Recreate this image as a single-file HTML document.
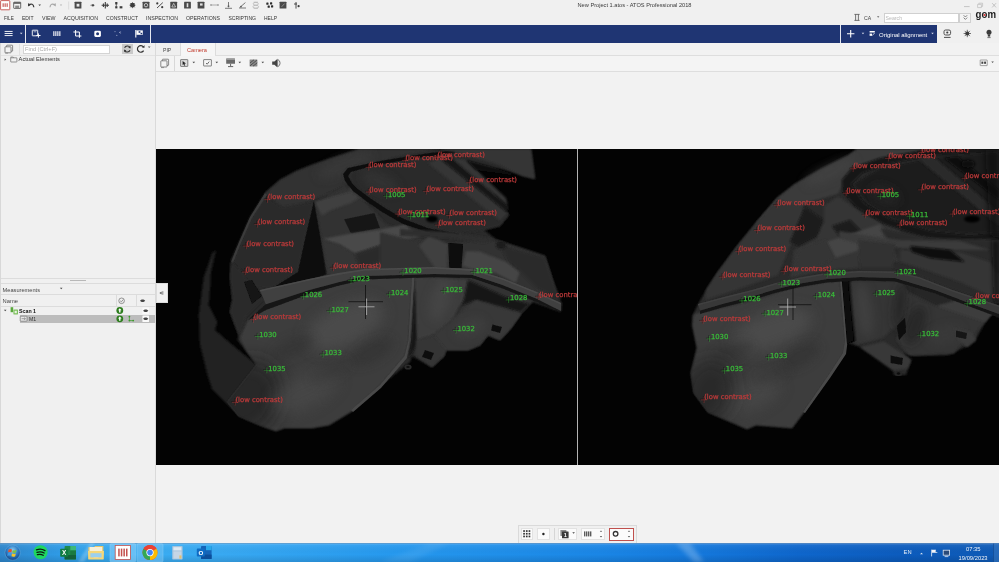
<!DOCTYPE html>
<html><head><meta charset="utf-8"><title>New Project 1.atos - ATOS Professional 2018</title>
<style>
*{box-sizing:border-box;margin:0;padding:0}
html,body{width:999px;height:562px;overflow:hidden;background:#f0f0f0;font-family:"Liberation Sans",sans-serif;color:#333}
.a{position:absolute}
#app{position:absolute;left:0;top:0;width:999px;height:562px;overflow:hidden}
#chrome{position:absolute;left:0;top:0;width:999px;height:562px;filter:blur(0.35px)}
</style></head><body>
<div id="app">
<div id="chrome">
<div class="a" style="left:0px;top:0px;width:999px;height:562px;background:#f0f0f0;"></div>
<div class="a" style="left:0px;top:25px;width:936.5px;height:17.5px;background:#1f3573;"></div>
<div class="a" style="left:25.2px;top:25px;width:0.8px;height:17.5px;background:#e4e7f0;"></div>
<div class="a" style="left:150.2px;top:25px;width:0.8px;height:17.5px;background:#e4e7f0;"></div>
<div class="a" style="left:840.2px;top:25px;width:0.8px;height:17.5px;background:#e4e7f0;"></div>
<div class="a" style="left:155.5px;top:43px;width:843.5px;height:500px;background:#f2f2f2;"></div>
<div class="a" style="left:155px;top:43px;width:1px;height:500px;background:#dadada;"></div>
<div class="a" style="left:156px;top:43px;width:24px;height:12.5px;background:#efefef;"></div>
<div class="a" style="left:180px;top:43px;width:35.5px;height:13px;background:#f6f6f6;border-left:1px solid #dcdcdc;border-right:1px solid #dcdcdc"></div>
<div class="a" style="left:215px;top:55px;width:784px;height:0.9px;background:#dedede;"></div>
<div class="a" style="left:156px;top:55px;width:24px;height:0.9px;background:#dedede;"></div>
<div class="a" style="left:156px;top:56px;width:843px;height:15px;background:#f4f4f4;"></div>
<div class="a" style="left:156px;top:71px;width:843px;height:0.9px;background:#dedede;"></div>
<div class="a" style="left:174.3px;top:56px;width:0.8px;height:14.5px;background:#d8d8d8;"></div>
<div class="a" style="left:155.5px;top:149px;width:843.5px;height:316px;background:#030303;"></div>
<div class="a" style="left:0px;top:55.2px;width:155px;height:0.8px;background:#e2e2e2;"></div>
<div class="a" style="left:0px;top:278px;width:155px;height:0.8px;background:#dcdcdc;"></div>
<div class="a" style="left:0px;top:282.8px;width:155px;height:0.8px;background:#dcdcdc;"></div>
<div class="a" style="left:70px;top:280px;width:15.5px;height:1.4px;background:#b8b8b8;"></div>
<div class="a" style="left:0px;top:294.3px;width:155px;height:0.8px;background:#dcdcdc;"></div>
<div class="a" style="left:0px;top:306.3px;width:155px;height:0.8px;background:#dcdcdc;"></div>
<div class="a" style="left:116.2px;top:295px;width:0.8px;height:11.5px;background:#dcdcdc;"></div>
<div class="a" style="left:136.2px;top:295px;width:0.8px;height:11.5px;background:#dcdcdc;"></div>
<div class="a" style="left:0px;top:43px;width:0.8px;height:500px;background:#d8d8d8;"></div>
<div class="a" style="left:19.2px;top:43.5px;width:0.7px;height:11.5px;background:#e0e0e0;"></div>
<div class="a" style="left:19.5px;top:315.3px;width:135.5px;height:7.4px;background:#bcbcbc;"></div>
<div class="a" style="left:23px;top:44.5px;width:87px;height:9px;background:#ffffff;border:0.7px solid #d4d4d4"></div>
<div class="a" style="left:122px;top:44px;width:10.5px;height:10px;background:#c9c9c9;"></div>
<div class="a" style="left:883.5px;top:12.5px;width:75.5px;height:10px;background:#ffffff;border:0.7px solid #d0d0d0"></div>
<div class="a" style="left:959px;top:12.5px;width:12px;height:10px;background:#f4f4f4;border:0.7px solid #d0d0d0"></div>
<div class="a" style="left:155.5px;top:282.5px;width:12.3px;height:20.5px;background:#f1f1f1;border:0.6px solid #dcdcdc"></div>
<div class="a" style="left:517.5px;top:524.5px;width:119px;height:19px;background:#f0f0f0;border:0.8px solid #dadada"></div>
<div class="a" style="left:521px;top:528px;width:12px;height:12px;background:#fbfbfb;border:0.6px solid #e2e2e2"></div>
<div class="a" style="left:537px;top:528px;width:12.5px;height:12px;background:#fbfbfb;border:0.6px solid #e2e2e2"></div>
<div class="a" style="left:558px;top:528px;width:19px;height:12px;background:#fbfbfb;border:0.6px solid #e2e2e2"></div>
<div class="a" style="left:581px;top:528px;width:24px;height:12px;background:#fbfbfb;border:0.6px solid #e2e2e2"></div>
<div class="a" style="left:609px;top:527.5px;width:25px;height:13px;background:#fbfbfb;border:0.9px solid #c0504d"></div>
<div class="a" style="left:554.3px;top:528px;width:0.8px;height:12px;background:#d6d6d6;"></div>
</div>
<svg class="a" style="left:0;top:0" width="999" height="562" viewBox="0 0 999 562">
<defs><filter id="b4" x="-100%" y="-100%" width="300%" height="300%"><feGaussianBlur stdDeviation="0.4"/></filter><filter id="b5" x="-100%" y="-100%" width="300%" height="300%"><feGaussianBlur stdDeviation="0.5"/></filter><filter id="b6" x="-100%" y="-100%" width="300%" height="300%"><feGaussianBlur stdDeviation="0.6"/></filter><filter id="b7" x="-100%" y="-100%" width="300%" height="300%"><feGaussianBlur stdDeviation="0.7"/></filter><filter id="b8" x="-100%" y="-100%" width="300%" height="300%"><feGaussianBlur stdDeviation="0.8"/></filter><filter id="b9" x="-100%" y="-100%" width="300%" height="300%"><feGaussianBlur stdDeviation="0.9"/></filter><filter id="b10" x="-100%" y="-100%" width="300%" height="300%"><feGaussianBlur stdDeviation="1"/></filter><filter id="b12" x="-100%" y="-100%" width="300%" height="300%"><feGaussianBlur stdDeviation="1.2"/></filter><filter id="b15" x="-100%" y="-100%" width="300%" height="300%"><feGaussianBlur stdDeviation="1.5"/></filter><filter id="b20" x="-100%" y="-100%" width="300%" height="300%"><feGaussianBlur stdDeviation="2"/></filter><filter id="b30" x="-100%" y="-100%" width="300%" height="300%"><feGaussianBlur stdDeviation="3"/></filter><filter id="b40" x="-100%" y="-100%" width="300%" height="300%"><feGaussianBlur stdDeviation="4"/></filter><filter id="b50" x="-100%" y="-100%" width="300%" height="300%"><feGaussianBlur stdDeviation="5"/></filter><filter id="b70" x="-100%" y="-100%" width="300%" height="300%"><feGaussianBlur stdDeviation="7"/></filter><filter id="b90" x="-100%" y="-100%" width="300%" height="300%"><feGaussianBlur stdDeviation="9"/></filter>
<clipPath id="cl"><rect x="155.5" y="149" width="421.5" height="316"/></clipPath>
<clipPath id="cr"><rect x="578" y="149" width="421" height="316"/></clipPath>
</defs>
<g clip-path="url(#cl)">
<polygon points="216,250 212.4,252.5 203.7,277.4 198.7,314.8 200,344.7 207.4,374.7 212,389 225,402 240,417 264,380 257,365 235,347 215,330 217.4,322 208.7,305 210,290 211,272" fill="#212121" filter="url(#b9)"/>
<polygon points="265,193 280,180 297,171 312,165 332,158 354,151 360,149 531,149 535,179 500,169 475,169 509,215 500,226 484,230 497,240 545,256 555,288 562,304 561,312 533,302 521,314 511,328 500,340 488,335 480,345 468,350 446,350 444,356 432,367 412,356 410,362 380,386 352,411 329,425 312,428 284,428 276,431 262,426 239,416 228,402 257,365 247,352 237.5,340 238.6,335 230,312 232.4,300 230,277 231,260 239,242 250,217" fill="#2c2c2c" filter="url(#b8)"/>
<polygon points="265,193 280,180 297,171 312,165 332,158 354,151 360,149 440,149 400,156 370,164 352,172 345,186 314,200 285,211" fill="#313131" filter="url(#b8)"/>
<ellipse cx="345" cy="165" rx="30" ry="8" fill="#3a3a3a" opacity="0.7" filter="url(#b40)" transform="rotate(-22 345 165)"/>
<polygon points="265,195 282,207 314,202 306,235 298,272 271,289 250,287 243,272 232,263 240,243 251,218" fill="#292929" filter="url(#b8)"/>
<polygon points="265,193 250,217 239,242 231,262 233,263 241,243 252,218 267,195" fill="#3a3a3a" filter="url(#b5)"/>
<polygon points="231,262 243,272 250,287 263,300 246,317 240,338 238.6,335 230,312 232.4,300 230,277" fill="#2c2c2c" filter="url(#b8)"/>
<polygon points="244,282 252,280 262,296 252,304" fill="#121212" filter="url(#b6)"/>
<polygon points="314,201 320,235 327,274 300,283 271,289 298,272 306,235" fill="#0b0b0b" filter="url(#b7)"/>
<polygon points="315,202 355,187 368,204 386,224 420,236 433,246 433,270 385,270 345,275 327,276 321,235" fill="#303030" filter="url(#b8)"/>
<polygon points="315,202 354.7,186.8 362,195.8 351,203 331,210 322,215.6" fill="#404040" filter="url(#b8)"/>
<polygon points="344,219.2 374.5,213 380,228 351,233.6" fill="#181818" filter="url(#b7)"/>
<polygon points="322.3,239 351,233.6 378,230 405,224.6 420,236 405,240 382,244.5 354.7,253.5 340,244.5" fill="#484848" filter="url(#b8)"/>
<polygon points="322.3,240 340,245.5 354.7,254.5 382,245.5 405,241 433,247 433,266 385,268 330,276 326,262" fill="#363636" filter="url(#b8)"/>
<polygon points="354.7,254.5 382,245.5 390,258 360,268" fill="#2a2a2a" filter="url(#b12)"/>
<polygon points="316,200 345,186 343,174 348,168 364,164.5 352,172 345,184 352,192 366,202 372,208 355,190" fill="#303030" filter="url(#b8)"/>
<polygon points="348,176 351,172 365,168 383,164 403,160.5 428,156.5 455,153 475,169 509,215 500,226 484,230 459,233.5 429,228.5 404,219 385,208 370,198 358,189 352,183" fill="#2a2a2a" filter="url(#b8)"/>
<ellipse cx="380" cy="182" rx="20" ry="9" fill="#363636" opacity="0.7" filter="url(#b40)" transform="rotate(25 380 182)"/>
<polygon points="343,174 348,168 364,164.5 383,160.5 403,157.3 428,153.3 455,150 455,153 428,156.5 403,160.5 383,164 365,168 351,172 348,176 352,183 358,189 370,198 385,208 404,219 429,228.5 459,233.5 459,237.5 428,232.5 402,223.5 382,212 366,201 353,191 345,181" fill="#101010" filter="url(#b6)"/>
<polygon points="428,163 440,159 508,213 500,221" fill="#353535" filter="url(#b8)"/>
<polygon points="442,160 452,158 509,207 507,212" fill="#161616" filter="url(#b8)"/>
<polygon points="452,158 466,160 506,198 508,206" fill="#343434" filter="url(#b8)"/>
<polygon points="440,149 531,149 535,179 522,176 500,165 470,156" fill="#363636" filter="url(#b8)"/>
<polygon points="466,160 492,167 521,177 505,174 476,170" fill="#0c0c0c" filter="url(#b8)"/>
<ellipse cx="432" cy="219" rx="6" ry="3.5" fill="#060606" filter="url(#b8)"/>
<polygon points="380,232 433,246 480,240 497,240 545,256 555,288 540,296 500,282 470,272 420,270 380,270" fill="#323232" filter="url(#b8)"/>
<polygon points="448,243 463,244 461.5,268 449.5,268" fill="#080808" filter="url(#b6)"/>
<polygon points="419,246 429,235.5 448,244 447,268 436,269" fill="#404040" filter="url(#b8)"/>
<polygon points="400,229 451,232 496,239 484,243 450,238 400,236" fill="#2e2e2e" filter="url(#b8)"/>
<polygon points="466,251 480,251.5 509,263 520,271.5 516,283 496,273 475,270 462,266" fill="#444444" filter="url(#b8)"/>
<polygon points="496,239 509,247.5 545,257.5 554,283 561,300 537,288.5 520,271.5 509,263" fill="#2a2a2a" filter="url(#b8)"/>
<ellipse cx="501" cy="245" rx="5" ry="4" fill="#1a1a1a" filter="url(#b10)"/>
<polygon points="248,320 266,308 309,292 337.5,284 365,278 400,276.5 412.5,277 408.5,341 404.5,357 380,386 352,411 329,425 312,428 284,428 276,431 262,426 239,416 228,402 257,365 247,352 240,338" fill="#3e3e3e" filter="url(#b8)"/>
<clipPath id="cp1"><polygon points="248,320 266,308 309,292 337.5,284 365,278 400,276.5 412.5,277 408.5,341 404.5,357 380,386 352,411 329,425 312,428 284,428 276,431 262,426 239,416 228,402 257,365 247,352 240,338"/></clipPath><g clip-path="url(#cp1)">
<ellipse cx="246" cy="398" rx="34" ry="40" fill="#222222" opacity="0.75" filter="url(#b90)" transform="rotate(30 246 398)"/>
<ellipse cx="345" cy="325" rx="42" ry="20" fill="#505050" opacity="0.75" filter="url(#b70)" transform="rotate(-25 345 325)"/>
<ellipse cx="305" cy="392" rx="36" ry="16" fill="#4c4c4c" opacity="0.65" filter="url(#b70)" transform="rotate(-25 305 392)"/>
<ellipse cx="372" cy="352" rx="24" ry="10" fill="#323232" opacity="0.6" filter="url(#b50)" transform="rotate(-28 372 352)"/>
<ellipse cx="292" cy="348" rx="24" ry="9" fill="#303030" opacity="0.55" filter="url(#b50)" transform="rotate(-25 292 348)"/>
<ellipse cx="330" cy="372" rx="22" ry="8" fill="#343434" opacity="0.4" filter="url(#b50)" transform="rotate(-25 330 372)"/>
</g>
<polygon points="412,276 414.5,276 411,341 407,358 381,388 353,412 351,410 380,385 404.5,356 408.5,340" fill="#484848" filter="url(#b5)"/>
<polygon points="416,274 470,276 500,285 533,300 521,314 511,328 500,340 488,335 480,345 468,350 446,350 444,356 432,367 416,356" fill="#303030" filter="url(#b8)"/>
<polygon points="415,290 418,290 417,345 408,359 411,341" fill="#161616" filter="url(#b8)"/>
<polygon points="415,277 468,280 464,300 452,320 434,334 417,340" fill="#3e3e3e" filter="url(#b8)"/>
<ellipse cx="440" cy="300" rx="10" ry="22" fill="#484848" opacity="0.6" filter="url(#b40)" transform="rotate(15 440 300)"/>
<polygon points="468,280 508,298 529,304 521,312 476,300 460,306 454,318 464,300" fill="#161616" filter="url(#b8)"/>
<polygon points="454,318 476,300 521,314 511,328 500,340 488,335 480,345 468,350 440,350 432,337" fill="#383838" filter="url(#b8)"/>
<ellipse cx="470" cy="328" rx="16" ry="9" fill="#424242" opacity="0.6" filter="url(#b40)" transform="rotate(-20 470 328)"/>
<polygon points="492.5,324.5 502,327 500,333 491,330.5" fill="#101010" filter="url(#b5)"/>
<polygon points="416,340 434,336 446,350 444,356 432,367 416,356" fill="#343434" filter="url(#b8)"/>
<polygon points="425,350 434,353 431,360 422,357" fill="#0e0e0e" filter="url(#b5)"/>
<ellipse cx="408" cy="367" rx="3.6" ry="2.6" fill="#2a2a2a" filter="url(#b5)"/>
<ellipse cx="408" cy="367" rx="1.6" ry="1.1" fill="#121212" filter="url(#b4)"/>
<polygon points="265.8,304.2 309.3,290.1 337.5,282.4 365,276.1 400,275 434,274 471.8,274.8 502.5,285 536.7,298.7 561,311 555,310 536.7,302 502.5,288.5 471.8,278 434,277.2 400,278.2 365,279.5 337.5,286 309.3,294 266,310 248,320" fill="#161616" filter="url(#b6)"/>
<polygon points="260,290 309,279 337.5,273.3 365,269 400,268 434,267 473.5,269.3 502.5,278.2 536.7,291.9 561,303 561,311 536.7,298.7 502.5,285 471.8,274.8 434,274 400,275 365,276.1 337.5,282.4 309.3,290.1 265.8,304.2" fill="#404040" filter="url(#b7)"/>
<polygon points="260,290 309,279 337.5,273.3 365,269 400,268 434,267 473.5,269.3 502.5,278.2 536.7,291.9 561,303 561,304.6 536.7,293.5 502.5,279.8 473.5,270.9 434,268.6 400,269.6 365,270.6 337.5,274.9 309,280.6 260,291.6" fill="#4e4e4e" opacity="0.8" filter="url(#b5)"/>
</g>
<g clip-path="url(#cr)">
<polygon points="697,306 706,290 717,273 737,246 755,224 777,198 795,184 821,169 848,155.5 857,149 999,149 999,316 990,314 977,337 967,346 948,355 914,356 903,353 911,361 906,375 894,375 892,367 860,347 846,342 844,353 829,376 804,412 792,428 756,425 747,429 708,412 694,393 691,373 697,348 692,317" fill="#2a2a2a" filter="url(#b8)"/>
<polygon points="755,224 777,198 795,184 821,169 848,155.5 857,149 930,149 890,158 862,168 845,180 838,194 810,202 780,218" fill="#3a3a3a" filter="url(#b8)"/>
<ellipse cx="830" cy="172" rx="28" ry="7" fill="#444444" opacity="0.6" filter="url(#b40)" transform="rotate(-25 830 172)"/>
<polygon points="737,246 755,224 777,200 804,207 792,242 778,275 730,292 705,300 706,290 717,273" fill="#353535" filter="url(#b8)"/>
<polygon points="805,207 823.5,220 817,237 799,246 790,242" fill="#1c1c1c" filter="url(#b8)"/>
<polygon points="824,206 838,196 866,216 900,228 900,262 860,268 826,270 790,278 794,250 817,238 824,222" fill="#363636" filter="url(#b8)"/>
<polygon points="832,226 850,220 862,232 842,240" fill="#1c1c1c" filter="url(#b8)"/>
<polygon points="826,242 880,224 892,240 835,258" fill="#444444" filter="url(#b8)"/>
<polygon points="800,248 826,240 835,258 812,268 792,275" fill="#363636" filter="url(#b8)"/>
<polygon points="842,180 852,168 880,158 920,151 960,149 999,149 999,152 930,156 890,163 862,173 851,184 864,203 890,219 930,231 970,235 999,232 999,238 960,241 920,236 884,224 856,207 843,192" fill="#121212" filter="url(#b8)"/>
<polygon points="853,184 880,168 930,158 999,152 999,232 970,234 930,230 892,218 866,202" fill="#1e1e1e" filter="url(#b8)"/>
<ellipse cx="885" cy="195" rx="16" ry="9" fill="#262626" opacity="0.7" filter="url(#b40)" transform="rotate(25 885 195)"/>
<polygon points="918,159 934,157 999,212 999,226" fill="#292929" filter="url(#b8)"/>
<polygon points="944,158 958,157 999,190 999,200" fill="#101010" filter="url(#b8)"/>
<ellipse cx="972" cy="219" rx="8" ry="3.5" fill="#060606" filter="url(#b8)"/>
<ellipse cx="968" cy="164" rx="7" ry="4" fill="#080808" filter="url(#b15)"/>
<polygon points="985,150 999,150 999,240 990,235" fill="#080808" opacity="0.7" filter="url(#b30)"/>
<polygon points="880,228 930,238 999,240 999,305 975,297 951,289 919,276 895,270 860,270 860,262 900,262" fill="#2c2c2c" filter="url(#b8)"/>
<polygon points="839,231 870,236 900,240 960,241 990,250 960,250 900,248 860,244 839,238" fill="#3a3a3a" filter="url(#b8)"/>
<polygon points="900,250 960,252 990,262 999,275 999,300 960,282 920,268 900,262" fill="#343434" filter="url(#b8)"/>
<polygon points="910,246 950,250 965,262 930,258 912,252" fill="#0e0e0e" filter="url(#b8)"/>
<polygon points="858,240 895,244 893,268 860,268" fill="#303030" filter="url(#b8)"/>
<polygon points="992,240 999,240 999,310 994,300" fill="#101010" opacity="0.8" filter="url(#b20)"/>
<polygon points="694,314 752,301 788,289 826,282 840,281 846,342 844,353 829,376 804,412 792,428 756,425 747,429 708,412 694,393 691,373 697,348 692,325" fill="#3e3e3e" filter="url(#b8)"/>
<clipPath id="cp2"><polygon points="694,314 752,301 788,289 826,282 840,281 846,342 844,353 829,376 804,412 792,428 756,425 747,429 708,412 694,393 691,373 697,348 692,325"/></clipPath><g clip-path="url(#cp2)">
<ellipse cx="772" cy="330" rx="42" ry="18" fill="#505050" opacity="0.75" filter="url(#b70)" transform="rotate(-20 772 330)"/>
<ellipse cx="748" cy="395" rx="34" ry="16" fill="#4c4c4c" opacity="0.65" filter="url(#b70)" transform="rotate(-20 748 395)"/>
<ellipse cx="800" cy="356" rx="22" ry="10" fill="#323232" opacity="0.6" filter="url(#b50)" transform="rotate(-30 800 356)"/>
<ellipse cx="732" cy="352" rx="22" ry="8" fill="#303030" opacity="0.55" filter="url(#b50)" transform="rotate(-20 732 352)"/>
<ellipse cx="770" cy="375" rx="20" ry="7" fill="#343434" opacity="0.4" filter="url(#b50)" transform="rotate(-20 770 375)"/>
<ellipse cx="708" cy="392" rx="26" ry="34" fill="#242424" opacity="0.7" filter="url(#b90)" transform="rotate(20 708 392)"/>
</g>
<polygon points="840,281 842,281 847.5,342 846,354 830,378 805,413 803,412 828,376 843,353 845,341" fill="#4a4a4a" filter="url(#b4)"/>
<polygon points="845,281 852,281 858,340 851,343" fill="#080808" filter="url(#b6)"/>
<polygon points="905,283 937,292 967,298 993,313 976,332 976,340 967,347 963,343 954,353.5 909,355.5 896,340 903,323" fill="#363636" filter="url(#b8)"/>
<polygon points="900,282 960,296 999,314 999,318 992,313 967,298 937,306 907,291" fill="#282828" filter="url(#b8)"/>
<polygon points="937,306 967,298 993,313 985,322" fill="#3c3c3c" filter="url(#b8)"/>
<ellipse cx="915" cy="325" rx="9" ry="20" fill="#202020" opacity="0.7" filter="url(#b40)" transform="rotate(20 915 325)"/>
<ellipse cx="945" cy="335" rx="18" ry="9" fill="#3e3e3e" opacity="0.5" filter="url(#b40)" transform="rotate(-15 945 335)"/>
<polygon points="850,281 901,281 907.5,291.5 905,313 897,325.5 882,338.5 856,345" fill="#363636" filter="url(#b8)"/>
<ellipse cx="864" cy="310" rx="8" ry="28" fill="#464646" opacity="0.6" filter="url(#b50)" transform="rotate(-8 864 310)"/>
<ellipse cx="900" cy="305" rx="6" ry="24" fill="#222222" opacity="0.7" filter="url(#b40)" transform="rotate(8 900 305)"/>
<polygon points="842,281 848,281 854,341 847,344" fill="#070707" filter="url(#b6)"/>
<polygon points="860,347 884,341.5 911.5,359.5 907.5,368.5 892.5,370.5" fill="#383838" filter="url(#b8)"/>
<polygon points="890.5,355.5 903,358 902,365 890.5,363" fill="#0e0e0e" filter="url(#b5)"/>
<ellipse cx="898.5" cy="373.5" rx="4" ry="2.6" fill="#262626" filter="url(#b5)"/>
<ellipse cx="898.5" cy="373.5" rx="1.8" ry="1.1" fill="#0c0c0c" filter="url(#b4)"/>
<polygon points="954,328 971,332 976,340 967,347 958,340" fill="#3a3a3a" filter="url(#b8)"/>
<polygon points="956,330.5 967,333 966,339 956,337" fill="#161616" filter="url(#b5)"/>
<polygon points="897,326 905,318 906,332 899,340" fill="#0a0a0a" filter="url(#b7)"/>
<polygon points="700,310.5 724,303.5 752,296.5 775,289.5 800,283.5 827,279 860,277 895,278 935,290 964,301 999,314 999,317.5 964,304.5 935,293.5 895,281.5 860,280.5 827,282.5 800,287 775,293 752,300 724,307 700,314" fill="#181818" filter="url(#b6)"/>
<polygon points="698,304 724,297 752,290 775,283.3 800,277.5 827,273 860,271 895,271.5 919,277 951,289.5 975,297.5 999,305.5 999,314 964,301 935,290 895,278 860,277 827,279 800,283.5 775,289.5 752,296.5 724,303.5 700,310.5" fill="#393939" filter="url(#b7)"/>
<polygon points="698,304 724,297 752,290 775,283.3 800,277.5 827,273 860,271 895,271.5 919,277 951,289.5 975,297.5 999,305.5 999,307 975,299 951,291 919,278.5 895,273 860,272.5 827,274.5 800,279 775,284.8 752,291.5 724,298.5 698,305.5" fill="#424242" opacity="0.8" filter="url(#b5)"/>
</g>
<rect x="577" y="149" width="1" height="316" fill="#b4b4b4"/>
<g font-family="DejaVu Sans, Liberation Sans, sans-serif" font-size="6.85" style="filter:blur(0.4px)" stroke-width="0.25">
<g clip-path="url(#cl)">
<path d="M348.5 301.7H383M365.5 285V319" stroke="#0a0a0a" stroke-width="0.7" fill="none"/>
<path d="M358.5 306.8H374.5M366.6 298.5V315" stroke="#b8b8b8" stroke-width="0.8" fill="none"/>
<path d="M263.7 199H270.1M266.9 195.8V202.2" stroke="#000" stroke-width="0.6" fill="none" opacity="0.7"/><path d="M264.3 199.6H270.7M267.5 196.4V202.8" stroke="#bc3a3a" stroke-width="0.55" fill="none" opacity="0.75"/><text x="267.7" y="199.2" fill="#bc3a3a" stroke="#bc3a3a">(low contrast)</text>
<path d="M253.8 223.7H260.2M257 220.5V226.9" stroke="#000" stroke-width="0.6" fill="none" opacity="0.7"/><path d="M254.4 224.3H260.8M257.6 221.1V227.5" stroke="#bc3a3a" stroke-width="0.55" fill="none" opacity="0.75"/><text x="257.8" y="223.9" fill="#bc3a3a" stroke="#bc3a3a">(low contrast)</text>
<path d="M242.6 245.4H249M245.8 242.2V248.6" stroke="#000" stroke-width="0.6" fill="none" opacity="0.7"/><path d="M243.2 246H249.6M246.4 242.8V249.2" stroke="#bc3a3a" stroke-width="0.55" fill="none" opacity="0.75"/><text x="246.6" y="245.6" fill="#bc3a3a" stroke="#bc3a3a">(low contrast)</text>
<path d="M241.4 271.4H247.8M244.6 268.2V274.6" stroke="#000" stroke-width="0.6" fill="none" opacity="0.7"/><path d="M242 272H248.4M245.2 268.8V275.2" stroke="#bc3a3a" stroke-width="0.55" fill="none" opacity="0.75"/><text x="245.4" y="271.6" fill="#bc3a3a" stroke="#bc3a3a">(low contrast)</text>
<path d="M364.9 166.7H371.3M368.1 163.5V169.9" stroke="#000" stroke-width="0.6" fill="none" opacity="0.7"/><path d="M365.5 167.3H371.9M368.7 164.1V170.5" stroke="#bc3a3a" stroke-width="0.55" fill="none" opacity="0.75"/><text x="368.9" y="166.9" fill="#bc3a3a" stroke="#bc3a3a">(low contrast)</text>
<path d="M365.2 191.3H371.6M368.4 188.1V194.5" stroke="#000" stroke-width="0.6" fill="none" opacity="0.7"/><path d="M365.8 191.9H372.2M369 188.7V195.1" stroke="#bc3a3a" stroke-width="0.55" fill="none" opacity="0.75"/><text x="369.2" y="191.5" fill="#bc3a3a" stroke="#bc3a3a">(low contrast)</text>
<path d="M329.7 267.4H336.1M332.9 264.2V270.6" stroke="#000" stroke-width="0.6" fill="none" opacity="0.7"/><path d="M330.3 268H336.7M333.5 264.8V271.2" stroke="#bc3a3a" stroke-width="0.55" fill="none" opacity="0.75"/><text x="333.7" y="267.6" fill="#bc3a3a" stroke="#bc3a3a">(low contrast)</text>
<path d="M401.4 159.8H407.8M404.6 156.6V163" stroke="#000" stroke-width="0.6" fill="none" opacity="0.7"/><path d="M402 160.4H408.4M405.2 157.2V163.6" stroke="#bc3a3a" stroke-width="0.55" fill="none" opacity="0.75"/><text x="405.4" y="160" fill="#bc3a3a" stroke="#bc3a3a">(low contrast)</text>
<path d="M394.2 213.4H400.6M397.4 210.2V216.6" stroke="#000" stroke-width="0.6" fill="none" opacity="0.7"/><path d="M394.8 214H401.2M398 210.8V217.2" stroke="#bc3a3a" stroke-width="0.55" fill="none" opacity="0.75"/><text x="398.2" y="213.6" fill="#bc3a3a" stroke="#bc3a3a">(low contrast)</text>
<path d="M422.5 190.7H428.9M425.7 187.5V193.9" stroke="#000" stroke-width="0.6" fill="none" opacity="0.7"/><path d="M423.1 191.3H429.5M426.3 188.1V194.5" stroke="#bc3a3a" stroke-width="0.55" fill="none" opacity="0.75"/><text x="426.5" y="190.9" fill="#bc3a3a" stroke="#bc3a3a">(low contrast)</text>
<path d="M433.5 156.6H439.9M436.7 153.4V159.8" stroke="#000" stroke-width="0.6" fill="none" opacity="0.7"/><path d="M434.1 157.2H440.5M437.3 154V160.4" stroke="#bc3a3a" stroke-width="0.55" fill="none" opacity="0.75"/><text x="437.5" y="156.8" fill="#bc3a3a" stroke="#bc3a3a">(low contrast)</text>
<path d="M465.6 182.1H472M468.8 178.9V185.3" stroke="#000" stroke-width="0.6" fill="none" opacity="0.7"/><path d="M466.2 182.7H472.6M469.4 179.5V185.9" stroke="#bc3a3a" stroke-width="0.55" fill="none" opacity="0.75"/><text x="469.6" y="182.3" fill="#bc3a3a" stroke="#bc3a3a">(low contrast)</text>
<path d="M445.5 214.9H451.9M448.7 211.7V218.1" stroke="#000" stroke-width="0.6" fill="none" opacity="0.7"/><path d="M446.1 215.5H452.5M449.3 212.3V218.7" stroke="#bc3a3a" stroke-width="0.55" fill="none" opacity="0.75"/><text x="449.5" y="215.1" fill="#bc3a3a" stroke="#bc3a3a">(low contrast)</text>
<path d="M434.5 224.4H440.9M437.7 221.2V227.6" stroke="#000" stroke-width="0.6" fill="none" opacity="0.7"/><path d="M435.1 225H441.5M438.3 221.8V228.2" stroke="#bc3a3a" stroke-width="0.55" fill="none" opacity="0.75"/><text x="438.5" y="224.6" fill="#bc3a3a" stroke="#bc3a3a">(low contrast)</text>
<path d="M249.7 319H256.1M252.9 315.8V322.2" stroke="#000" stroke-width="0.6" fill="none" opacity="0.7"/><path d="M250.3 319.6H256.7M253.5 316.4V322.8" stroke="#bc3a3a" stroke-width="0.55" fill="none" opacity="0.75"/><text x="253.7" y="319.2" fill="#bc3a3a" stroke="#bc3a3a">(low contrast)</text>
<path d="M231.4 401.7H237.8M234.6 398.5V404.9" stroke="#000" stroke-width="0.6" fill="none" opacity="0.7"/><path d="M232 402.3H238.4M235.2 399.1V405.5" stroke="#bc3a3a" stroke-width="0.55" fill="none" opacity="0.75"/><text x="235.4" y="401.9" fill="#bc3a3a" stroke="#bc3a3a">(low contrast)</text>
<path d="M535 296.3H541.4M538.2 293.1V299.5" stroke="#000" stroke-width="0.6" fill="none" opacity="0.7"/><path d="M535.6 296.9H542M538.8 293.7V300.1" stroke="#bc3a3a" stroke-width="0.55" fill="none" opacity="0.75"/><text x="539" y="296.5" fill="#bc3a3a" stroke="#bc3a3a">(low contrast)</text>
<path d="M383 195.5H389M386 192.5V198.5" stroke="#000" stroke-width="0.6" fill="none" opacity="0.7"/><path d="M383.6 196.1H389.6M386.6 193.1V199.1" stroke="#38ba38" stroke-width="0.55" fill="none" opacity="0.75"/><text x="388" y="196.6" fill="#38ba38" stroke="#38ba38">1005</text>
<path d="M406.8 215.8H412.8M409.8 212.8V218.8" stroke="#000" stroke-width="0.6" fill="none" opacity="0.7"/><path d="M407.4 216.4H413.4M410.4 213.4V219.4" stroke="#38ba38" stroke-width="0.55" fill="none" opacity="0.75"/><text x="411.8" y="216.9" fill="#38ba38" stroke="#38ba38">1011</text>
<path d="M399.3 272.2H405.3M402.3 269.2V275.2" stroke="#000" stroke-width="0.6" fill="none" opacity="0.7"/><path d="M399.9 272.8H405.9M402.9 269.8V275.8" stroke="#38ba38" stroke-width="0.55" fill="none" opacity="0.75"/><text x="404.3" y="273.3" fill="#38ba38" stroke="#38ba38">1020</text>
<path d="M347.4 280H353.4M350.4 277V283" stroke="#000" stroke-width="0.6" fill="none" opacity="0.7"/><path d="M348 280.6H354M351 277.6V283.6" stroke="#38ba38" stroke-width="0.55" fill="none" opacity="0.75"/><text x="352.4" y="281.1" fill="#38ba38" stroke="#38ba38">1023</text>
<path d="M299.8 296H305.8M302.8 293V299" stroke="#000" stroke-width="0.6" fill="none" opacity="0.7"/><path d="M300.4 296.6H306.4M303.4 293.6V299.6" stroke="#38ba38" stroke-width="0.55" fill="none" opacity="0.75"/><text x="304.8" y="297.1" fill="#38ba38" stroke="#38ba38">1026</text>
<path d="M386 294.1H392M389 291.1V297.1" stroke="#000" stroke-width="0.6" fill="none" opacity="0.7"/><path d="M386.6 294.7H392.6M389.6 291.7V297.7" stroke="#38ba38" stroke-width="0.55" fill="none" opacity="0.75"/><text x="391" y="295.2" fill="#38ba38" stroke="#38ba38">1024</text>
<path d="M254.2 335.9H260.2M257.2 332.9V338.9" stroke="#000" stroke-width="0.6" fill="none" opacity="0.7"/><path d="M254.8 336.5H260.8M257.8 333.5V339.5" stroke="#38ba38" stroke-width="0.55" fill="none" opacity="0.75"/><text x="259.2" y="337" fill="#38ba38" stroke="#38ba38">1030</text>
<path d="M319.4 354.2H325.4M322.4 351.2V357.2" stroke="#000" stroke-width="0.6" fill="none" opacity="0.7"/><path d="M320 354.8H326M323 351.8V357.8" stroke="#38ba38" stroke-width="0.55" fill="none" opacity="0.75"/><text x="324.4" y="355.3" fill="#38ba38" stroke="#38ba38">1033</text>
<path d="M263.2 369.7H269.2M266.2 366.7V372.7" stroke="#000" stroke-width="0.6" fill="none" opacity="0.7"/><path d="M263.8 370.3H269.8M266.8 367.3V373.3" stroke="#38ba38" stroke-width="0.55" fill="none" opacity="0.75"/><text x="268.2" y="370.8" fill="#38ba38" stroke="#38ba38">1035</text>
<path d="M326.4 310.6H332.4M329.4 307.6V313.6" stroke="#000" stroke-width="0.6" fill="none" opacity="0.7"/><path d="M327 311.2H333M330 308.2V314.2" stroke="#38ba38" stroke-width="0.55" fill="none" opacity="0.75"/><text x="331.4" y="311.7" fill="#38ba38" stroke="#38ba38">1027</text>
<path d="M470.4 271.6H476.4M473.4 268.6V274.6" stroke="#000" stroke-width="0.6" fill="none" opacity="0.7"/><path d="M471 272.2H477M474 269.2V275.2" stroke="#38ba38" stroke-width="0.55" fill="none" opacity="0.75"/><text x="475.4" y="272.7" fill="#38ba38" stroke="#38ba38">1021</text>
<path d="M440.4 290.7H446.4M443.4 287.7V293.7" stroke="#000" stroke-width="0.6" fill="none" opacity="0.7"/><path d="M441 291.3H447M444 288.3V294.3" stroke="#38ba38" stroke-width="0.55" fill="none" opacity="0.75"/><text x="445.4" y="291.8" fill="#38ba38" stroke="#38ba38">1025</text>
<path d="M505 299.3H511M508 296.3V302.3" stroke="#000" stroke-width="0.6" fill="none" opacity="0.7"/><path d="M505.6 299.9H511.6M508.6 296.9V302.9" stroke="#38ba38" stroke-width="0.55" fill="none" opacity="0.75"/><text x="510" y="300.4" fill="#38ba38" stroke="#38ba38">1028</text>
<path d="M452.4 329.9H458.4M455.4 326.9V332.9" stroke="#000" stroke-width="0.6" fill="none" opacity="0.7"/><path d="M453 330.5H459M456 327.5V333.5" stroke="#38ba38" stroke-width="0.55" fill="none" opacity="0.75"/><text x="457.4" y="331" fill="#38ba38" stroke="#38ba38">1032</text>
</g><g clip-path="url(#cr)">
<path d="M778 304.7H811.5M793 287.6V320" stroke="#0a0a0a" stroke-width="0.7" fill="none"/>
<path d="M779.5 307H796M787.7 298.5V315.5" stroke="#b8b8b8" stroke-width="0.8" fill="none"/>
<path d="M773.2 204.6H779.6M776.4 201.4V207.8" stroke="#000" stroke-width="0.6" fill="none" opacity="0.7"/><path d="M773.8 205.2H780.2M777 202V208.4" stroke="#bc3a3a" stroke-width="0.55" fill="none" opacity="0.75"/><text x="777.2" y="204.8" fill="#bc3a3a" stroke="#bc3a3a">(low contrast)</text>
<path d="M753.5 229.9H759.9M756.7 226.7V233.1" stroke="#000" stroke-width="0.6" fill="none" opacity="0.7"/><path d="M754.1 230.5H760.5M757.3 227.3V233.7" stroke="#bc3a3a" stroke-width="0.55" fill="none" opacity="0.75"/><text x="757.5" y="230.1" fill="#bc3a3a" stroke="#bc3a3a">(low contrast)</text>
<path d="M734.7 251H741.1M737.9 247.8V254.2" stroke="#000" stroke-width="0.6" fill="none" opacity="0.7"/><path d="M735.3 251.6H741.7M738.5 248.4V254.8" stroke="#bc3a3a" stroke-width="0.55" fill="none" opacity="0.75"/><text x="738.7" y="251.2" fill="#bc3a3a" stroke="#bc3a3a">(low contrast)</text>
<path d="M718.9 276.4H725.3M722.1 273.2V279.6" stroke="#000" stroke-width="0.6" fill="none" opacity="0.7"/><path d="M719.5 277H725.9M722.7 273.8V280.2" stroke="#bc3a3a" stroke-width="0.55" fill="none" opacity="0.75"/><text x="722.9" y="276.6" fill="#bc3a3a" stroke="#bc3a3a">(low contrast)</text>
<path d="M780.2 270.7H786.6M783.4 267.5V273.9" stroke="#000" stroke-width="0.6" fill="none" opacity="0.7"/><path d="M780.8 271.3H787.2M784 268.1V274.5" stroke="#bc3a3a" stroke-width="0.55" fill="none" opacity="0.75"/><text x="784.2" y="270.9" fill="#bc3a3a" stroke="#bc3a3a">(low contrast)</text>
<path d="M842.2 192.6H848.6M845.4 189.4V195.8" stroke="#000" stroke-width="0.6" fill="none" opacity="0.7"/><path d="M842.8 193.2H849.2M846 190V196.4" stroke="#bc3a3a" stroke-width="0.55" fill="none" opacity="0.75"/><text x="846.2" y="192.8" fill="#bc3a3a" stroke="#bc3a3a">(low contrast)</text>
<path d="M849.3 168.2H855.7M852.5 165V171.4" stroke="#000" stroke-width="0.6" fill="none" opacity="0.7"/><path d="M849.9 168.8H856.3M853.1 165.6V172" stroke="#bc3a3a" stroke-width="0.55" fill="none" opacity="0.75"/><text x="853.3" y="168.4" fill="#bc3a3a" stroke="#bc3a3a">(low contrast)</text>
<path d="M884.5 157.7H890.9M887.7 154.5V160.9" stroke="#000" stroke-width="0.6" fill="none" opacity="0.7"/><path d="M885.1 158.3H891.5M888.3 155.1V161.5" stroke="#bc3a3a" stroke-width="0.55" fill="none" opacity="0.75"/><text x="888.5" y="157.9" fill="#bc3a3a" stroke="#bc3a3a">(low contrast)</text>
<path d="M917.4 151.7H923.8M920.6 148.5V154.9" stroke="#000" stroke-width="0.6" fill="none" opacity="0.7"/><path d="M918 152.3H924.4M921.2 149.1V155.5" stroke="#bc3a3a" stroke-width="0.55" fill="none" opacity="0.75"/><text x="921.4" y="151.9" fill="#bc3a3a" stroke="#bc3a3a">(low contrast)</text>
<path d="M917.5 189.2H923.9M920.7 186V192.4" stroke="#000" stroke-width="0.6" fill="none" opacity="0.7"/><path d="M918.1 189.8H924.5M921.3 186.6V193" stroke="#bc3a3a" stroke-width="0.55" fill="none" opacity="0.75"/><text x="921.5" y="189.4" fill="#bc3a3a" stroke="#bc3a3a">(low contrast)</text>
<path d="M861.6 214.4H868M864.8 211.2V217.6" stroke="#000" stroke-width="0.6" fill="none" opacity="0.7"/><path d="M862.2 215H868.6M865.4 211.8V218.2" stroke="#bc3a3a" stroke-width="0.55" fill="none" opacity="0.75"/><text x="865.6" y="214.6" fill="#bc3a3a" stroke="#bc3a3a">(low contrast)</text>
<path d="M896 224.4H902.4M899.2 221.2V227.6" stroke="#000" stroke-width="0.6" fill="none" opacity="0.7"/><path d="M896.6 225H903M899.8 221.8V228.2" stroke="#bc3a3a" stroke-width="0.55" fill="none" opacity="0.75"/><text x="900" y="224.6" fill="#bc3a3a" stroke="#bc3a3a">(low contrast)</text>
<path d="M948.9 213.4H955.3M952.1 210.2V216.6" stroke="#000" stroke-width="0.6" fill="none" opacity="0.7"/><path d="M949.5 214H955.9M952.7 210.8V217.2" stroke="#bc3a3a" stroke-width="0.55" fill="none" opacity="0.75"/><text x="952.9" y="213.6" fill="#bc3a3a" stroke="#bc3a3a">(low contrast)</text>
<path d="M961 177.7H967.4M964.2 174.5V180.9" stroke="#000" stroke-width="0.6" fill="none" opacity="0.7"/><path d="M961.6 178.3H968M964.8 175.1V181.5" stroke="#bc3a3a" stroke-width="0.55" fill="none" opacity="0.75"/><text x="965" y="177.9" fill="#bc3a3a" stroke="#bc3a3a">(low contrast)</text>
<path d="M699.2 320.4H705.6M702.4 317.2V323.6" stroke="#000" stroke-width="0.6" fill="none" opacity="0.7"/><path d="M699.8 321H706.2M703 317.8V324.2" stroke="#bc3a3a" stroke-width="0.55" fill="none" opacity="0.75"/><text x="703.2" y="320.6" fill="#bc3a3a" stroke="#bc3a3a">(low contrast)</text>
<path d="M700.2 399.2H706.6M703.4 396V402.4" stroke="#000" stroke-width="0.6" fill="none" opacity="0.7"/><path d="M700.8 399.8H707.2M704 396.6V403" stroke="#bc3a3a" stroke-width="0.55" fill="none" opacity="0.75"/><text x="704.2" y="399.4" fill="#bc3a3a" stroke="#bc3a3a">(low contrast)</text>
<path d="M971.2 297.9H977.6M974.4 294.7V301.1" stroke="#000" stroke-width="0.6" fill="none" opacity="0.7"/><path d="M971.8 298.5H978.2M975 295.3V301.7" stroke="#bc3a3a" stroke-width="0.55" fill="none" opacity="0.75"/><text x="975.2" y="298.1" fill="#bc3a3a" stroke="#bc3a3a">(low contrast)</text>
<path d="M876.7 195.7H882.7M879.7 192.7V198.7" stroke="#000" stroke-width="0.6" fill="none" opacity="0.7"/><path d="M877.3 196.3H883.3M880.3 193.3V199.3" stroke="#38ba38" stroke-width="0.55" fill="none" opacity="0.75"/><text x="881.7" y="196.8" fill="#38ba38" stroke="#38ba38">1005</text>
<path d="M906 215.6H912M909 212.6V218.6" stroke="#000" stroke-width="0.6" fill="none" opacity="0.7"/><path d="M906.6 216.2H912.6M909.6 213.2V219.2" stroke="#38ba38" stroke-width="0.55" fill="none" opacity="0.75"/><text x="911" y="216.7" fill="#38ba38" stroke="#38ba38">1011</text>
<path d="M823.4 274.1H829.4M826.4 271.1V277.1" stroke="#000" stroke-width="0.6" fill="none" opacity="0.7"/><path d="M824 274.7H830M827 271.7V277.7" stroke="#38ba38" stroke-width="0.55" fill="none" opacity="0.75"/><text x="828.4" y="275.2" fill="#38ba38" stroke="#38ba38">1020</text>
<path d="M894.1 272.6H900.1M897.1 269.6V275.6" stroke="#000" stroke-width="0.6" fill="none" opacity="0.7"/><path d="M894.7 273.2H900.7M897.7 270.2V276.2" stroke="#38ba38" stroke-width="0.55" fill="none" opacity="0.75"/><text x="899.1" y="273.7" fill="#38ba38" stroke="#38ba38">1021</text>
<path d="M777.6 283.4H783.6M780.6 280.4V286.4" stroke="#000" stroke-width="0.6" fill="none" opacity="0.7"/><path d="M778.2 284H784.2M781.2 281V287" stroke="#38ba38" stroke-width="0.55" fill="none" opacity="0.75"/><text x="782.6" y="284.5" fill="#38ba38" stroke="#38ba38">1023</text>
<path d="M812.8 296H818.8M815.8 293V299" stroke="#000" stroke-width="0.6" fill="none" opacity="0.7"/><path d="M813.4 296.6H819.4M816.4 293.6V299.6" stroke="#38ba38" stroke-width="0.55" fill="none" opacity="0.75"/><text x="817.8" y="297.1" fill="#38ba38" stroke="#38ba38">1024</text>
<path d="M872.8 293.4H878.8M875.8 290.4V296.4" stroke="#000" stroke-width="0.6" fill="none" opacity="0.7"/><path d="M873.4 294H879.4M876.4 291V297" stroke="#38ba38" stroke-width="0.55" fill="none" opacity="0.75"/><text x="877.8" y="294.5" fill="#38ba38" stroke="#38ba38">1025</text>
<path d="M738.3 300.2H744.3M741.3 297.2V303.2" stroke="#000" stroke-width="0.6" fill="none" opacity="0.7"/><path d="M738.9 300.8H744.9M741.9 297.8V303.8" stroke="#38ba38" stroke-width="0.55" fill="none" opacity="0.75"/><text x="743.3" y="301.3" fill="#38ba38" stroke="#38ba38">1026</text>
<path d="M761.4 313.4H767.4M764.4 310.4V316.4" stroke="#000" stroke-width="0.6" fill="none" opacity="0.7"/><path d="M762 314H768M765 311V317" stroke="#38ba38" stroke-width="0.55" fill="none" opacity="0.75"/><text x="766.4" y="314.5" fill="#38ba38" stroke="#38ba38">1027</text>
<path d="M705.9 338.2H711.9M708.9 335.2V341.2" stroke="#000" stroke-width="0.6" fill="none" opacity="0.7"/><path d="M706.5 338.8H712.5M709.5 335.8V341.8" stroke="#38ba38" stroke-width="0.55" fill="none" opacity="0.75"/><text x="710.9" y="339.3" fill="#38ba38" stroke="#38ba38">1030</text>
<path d="M765 357H771M768 354V360" stroke="#000" stroke-width="0.6" fill="none" opacity="0.7"/><path d="M765.6 357.6H771.6M768.6 354.6V360.6" stroke="#38ba38" stroke-width="0.55" fill="none" opacity="0.75"/><text x="770" y="358.1" fill="#38ba38" stroke="#38ba38">1033</text>
<path d="M720.8 370.2H726.8M723.8 367.2V373.2" stroke="#000" stroke-width="0.6" fill="none" opacity="0.7"/><path d="M721.4 370.8H727.4M724.4 367.8V373.8" stroke="#38ba38" stroke-width="0.55" fill="none" opacity="0.75"/><text x="725.8" y="371.3" fill="#38ba38" stroke="#38ba38">1035</text>
<path d="M916.8 334.5H922.8M919.8 331.5V337.5" stroke="#000" stroke-width="0.6" fill="none" opacity="0.7"/><path d="M917.4 335.1H923.4M920.4 332.1V338.1" stroke="#38ba38" stroke-width="0.55" fill="none" opacity="0.75"/><text x="921.8" y="335.6" fill="#38ba38" stroke="#38ba38">1032</text>
<path d="M963.6 303.1H969.6M966.6 300.1V306.1" stroke="#000" stroke-width="0.6" fill="none" opacity="0.7"/><path d="M964.2 303.7H970.2M967.2 300.7V306.7" stroke="#38ba38" stroke-width="0.55" fill="none" opacity="0.75"/><text x="968.6" y="304.2" fill="#38ba38" stroke="#38ba38">1028</text>
</g></g>
</svg>
<div id="chrome2" class="a" style="left:0;top:0;width:999px;height:562px;filter:blur(0.35px)">
<svg class="a" style="left:0;top:0" width="999" height="562" viewBox="0 0 999 562" font-family="Liberation Sans, sans-serif">
<rect x="0.6" y="0.6" width="9.2" height="9.2" rx="0.5" fill="#ffffff" stroke="#c4504d" stroke-width="0.9"/>
<rect x="2.6" y="3.3" width="1.1" height="3.6" rx="0" fill="#c4504d"/>
<rect x="4.6" y="3.3" width="1.1" height="3.6" rx="0" fill="#c4504d"/>
<rect x="6.6" y="3.3" width="1.1" height="3.6" rx="0" fill="#c4504d"/>
<rect x="13.7" y="2.2" width="7" height="6.2" rx="0.5" fill="#f4f4f4" stroke="#5a5a5a" stroke-width="0.9"/>
<rect x="13.7" y="2.2" width="7" height="1.6" rx="0" fill="#5a5a5a"/>
<rect x="15.2" y="5.6" width="4" height="2.6" rx="0" fill="#888"/>
<path d="M28 6.6L28 3.2L31.2 4.6Z" fill="#3c3c3c" />
<path d="M29 5.2C31 3.2 33.6 4 33.8 7.2" fill="none" stroke="#3c3c3c" stroke-width="1.3" />
<path d="M38.4 4.45L41 4.45L39.7 5.95Z" fill="#444" />
<path d="M55.8 6.6L55.8 3.2L52.6 4.6Z" fill="#a8a8a8" />
<path d="M54.8 5.2C52.8 3.2 50.2 4 50 7.2" fill="none" stroke="#a8a8a8" stroke-width="1.2" />
<path d="M59.8 4.5L62.2 4.5L61 5.9Z" fill="#b4b4b4" />
<rect x="68.4" y="1.5" width="0.7" height="8" rx="0" fill="#d4d4d4"/>
<rect x="74.6" y="1.8" width="6.8" height="6.8" rx="0.4" fill="#4a4a4a"/>
<rect x="76.6" y="3.8" width="2.8" height="2.8" rx="0" fill="#e8e8e8"/>
<path d="M90 5.3C91.2 3.8 93.8 3.8 95 5.3C93.8 6.8 91.2 6.8 90 5.3Z" fill="#9a9a9a" />
<circle cx="93" cy="5.3" r="1.1" fill="#444"/>
<path d="M101.6 5.2H109M105.3 2V8.6M103.4 3.4V7M107.2 3.4V7" fill="none" stroke="#3c3c3c" stroke-width="1.1" />
<rect x="115.2" y="2" width="2.2" height="2.4" rx="0" fill="#3c3c3c"/>
<rect x="115.2" y="6.2" width="2.2" height="2.2" rx="0" fill="#3c3c3c"/>
<rect x="119.6" y="6.2" width="2.8" height="2.2" rx="0" fill="#3c3c3c"/>
<path d="M116.3 4V6.5" fill="none" stroke="#3c3c3c" stroke-width="0.7" />
<circle cx="132.5" cy="5.2" r="2.4" fill="#3c3c3c"/>
<path d="M129.4 5.2H135.6M132.5 2.2V8.2M130.3 3L134.7 7.4M134.7 3L130.3 7.4" fill="none" stroke="#3c3c3c" stroke-width="0.6" />
<rect x="142.6" y="1.8" width="6.8" height="6.8" rx="0.4" fill="#4a4a4a"/>
<circle cx="146" cy="5.2" r="1.7" fill="none" stroke="#e0e0e0" stroke-width="0.8"/>
<circle cx="157.3" cy="3.4" r="1.1" fill="#3c3c3c"/>
<circle cx="162.2" cy="7.2" r="1.1" fill="#3c3c3c"/>
<path d="M157 8L162.8 2.6" fill="none" stroke="#3c3c3c" stroke-width="0.9" />
<rect x="170.3" y="1.8" width="6.8" height="6.8" rx="0.4" fill="#4a4a4a"/>
<path d="M173.7 3.4L175.6 7H171.8Z" fill="none" stroke="#e0e0e0" stroke-width="0.7" />
<rect x="184.1" y="1.8" width="6.8" height="6.8" rx="0.4" fill="#4a4a4a"/>
<rect x="186.7" y="3.2" width="1.6" height="4" rx="0" fill="#e0e0e0"/>
<rect x="197.6" y="1.8" width="6.8" height="6.8" rx="0.4" fill="#4a4a4a"/>
<rect x="200" y="3.4" width="2.6" height="2.2" rx="0" fill="#e0e0e0"/>
<path d="M210.6 5H218.4" fill="none" stroke="#9a9a9a" stroke-width="0.8" />
<circle cx="211" cy="5" r="0.8" fill="#888"/>
<circle cx="218" cy="5" r="0.8" fill="#888"/>
<path d="M228.5 2V7.4M225 8.3H232" fill="none" stroke="#5a5a5a" stroke-width="0.8" />
<circle cx="228.5" cy="6.2" r="0.9" fill="#5a5a5a"/>
<path d="M239.2 8H246M239.6 7.6L245.4 2.6" fill="none" stroke="#5a5a5a" stroke-width="0.8" />
<circle cx="241" cy="6.6" r="0.9" fill="#5a5a5a"/>
<path d="M253.6 2.2H258M253.6 8.2H258" fill="none" stroke="#aaa" stroke-width="0.6" />
<ellipse cx="255.8" cy="3.8" rx="2.6" ry="1.4" fill="none" stroke="#b0b0b0" stroke-width="0.7"/>
<ellipse cx="255.8" cy="6.8" rx="2.9" ry="1.5" fill="none" stroke="#b0b0b0" stroke-width="0.7"/>
<rect x="266.3" y="2.6" width="2.2" height="2.2" rx="0.5" fill="#2a2a2a"/>
<rect x="270" y="2.2" width="2.2" height="2.2" rx="0.5" fill="#2a2a2a"/>
<rect x="267.6" y="5.6" width="2.2" height="2.2" rx="0.5" fill="#2a2a2a"/>
<rect x="271" y="5.2" width="2.2" height="2.2" rx="0.5" fill="#2a2a2a"/>
<rect x="279.6" y="1.8" width="6.8" height="6.8" rx="0.4" fill="#4a4a4a"/>
<path d="M281.6 6.8L284.6 3.6" fill="none" stroke="#aaa" stroke-width="0.7" />
<path d="M296 2V8.6M294 4H297" fill="none" stroke="#3c3c3c" stroke-width="0.9" />
<circle cx="298.6" cy="6.2" r="1.1" fill="#3c3c3c"/>
<text x="577.5" y="7.4" font-size="5.6" fill="#3a3a3a" textLength="114" lengthAdjust="spacingAndGlyphs">New Project 1.atos - ATOS Professional 2018</text>
<path d="M964 6.6H969.6" fill="none" stroke="#b0b0b0" stroke-width="0.7" />
<path d="M977.6 4.4H981.4V7.6H977.6ZM978.8 4.4V3.2H982.6V6.4H981.4" fill="none" stroke="#b4b4b4" stroke-width="0.6" />
<path d="M992.2 3.2L996 7.4M996 3.2L992.2 7.4" fill="none" stroke="#b0b0b0" stroke-width="0.7" />
<text x="4" y="20.2" font-size="6" fill="#333" textLength="9.8" lengthAdjust="spacingAndGlyphs">FILE</text>
<text x="22" y="20.2" font-size="6" fill="#333" textLength="11.5" lengthAdjust="spacingAndGlyphs">EDIT</text>
<text x="42" y="20.2" font-size="6" fill="#333" textLength="13.5" lengthAdjust="spacingAndGlyphs">VIEW</text>
<text x="63.4" y="20.2" font-size="6" fill="#333" textLength="34.6" lengthAdjust="spacingAndGlyphs">ACQUISITION</text>
<text x="106" y="20.2" font-size="6" fill="#333" textLength="32" lengthAdjust="spacingAndGlyphs">CONSTRUCT</text>
<text x="146" y="20.2" font-size="6" fill="#333" textLength="32" lengthAdjust="spacingAndGlyphs">INSPECTION</text>
<text x="186" y="20.2" font-size="6" fill="#333" textLength="34" lengthAdjust="spacingAndGlyphs">OPERATIONS</text>
<text x="228.5" y="20.2" font-size="6" fill="#333" textLength="27.5" lengthAdjust="spacingAndGlyphs">SCRIPTING</text>
<text x="264" y="20.2" font-size="6" fill="#333" textLength="13" lengthAdjust="spacingAndGlyphs">HELP</text>
<path d="M854.4 14.4H859.6M854.4 20.4H859.6M855.6 14.4V20.4M858.4 14.4V20.4" fill="none" stroke="#555" stroke-width="0.8" />
<text x="864" y="20" font-size="5.6" fill="#444" textLength="7.2" lengthAdjust="spacingAndGlyphs">CA</text>
<path d="M877 16.3L879.4 16.3L878.2 17.7Z" fill="#666" />
<text x="885.6" y="19.6" font-size="5.6" fill="#b8b8b8" textLength="16.5" lengthAdjust="spacingAndGlyphs">Search</text>
<path d="M963.6 15.2L965.4 17L967.2 15.2M963.6 17.6L965.4 19.4L967.2 17.6" fill="none" stroke="#555" stroke-width="0.7" />
<text x="975.6" y="17.7" font-size="10.8" fill="#1e1e1e" textLength="20.4" lengthAdjust="spacingAndGlyphs" font-weight="bold">gom</text>
<circle cx="984.5" cy="15" r="1" fill="#e03030"/>
<rect x="4.6" y="30.95" width="8" height="0.9" rx="0" fill="#ffffff"/>
<rect x="4.6" y="33.05" width="8" height="0.9" rx="0" fill="#ffffff"/>
<rect x="4.6" y="35.15" width="8" height="0.9" rx="0" fill="#ffffff"/>
<path d="M19.9 32.65L22.5 32.65L21.2 34.15Z" fill="#d8dcea" />
<rect x="32.3" y="30.2" width="5.4" height="5.6" rx="0.3" fill="none" stroke="#ffffff" stroke-width="0.9"/>
<path d="M33.6 31.8H36.4" fill="none" stroke="#ffffff" stroke-width="0.6" />
<path d="M38.4 33.4V37.6M36.3 35.5H40.5" fill="none" stroke="#ffffff" stroke-width="1" />
<rect x="53.3" y="31.2" width="1.1" height="4.8" rx="0" fill="#ffffff"/>
<rect x="55.3" y="31.2" width="1.1" height="4.8" rx="0" fill="#ffffff"/>
<rect x="57.3" y="31.2" width="1.1" height="4.8" rx="0" fill="#ffffff"/>
<rect x="59.3" y="31.2" width="1.1" height="4.8" rx="0" fill="#ffffff"/>
<path d="M75.6 30V36H81.4M73.4 32H79.4V37.8" fill="none" stroke="#ffffff" stroke-width="1" />
<rect x="94.3" y="30.7" width="6.6" height="6.2" rx="1.4" fill="#ffffff"/>
<circle cx="97.6" cy="33.8" r="1.5" fill="#1f3573"/>
<circle cx="115" cy="31.6" r="0.6" fill="#8c98bd"/>
<circle cx="119.6" cy="32.4" r="0.6" fill="#8c98bd"/>
<circle cx="116.8" cy="35.4" r="0.6" fill="#8c98bd"/>
<path d="M120.6 31V34" fill="none" stroke="#8c98bd" stroke-width="0.5" />
<path d="M135.8 30V37.6" fill="none" stroke="#ffffff" stroke-width="1.1" />
<rect x="136.4" y="30.4" width="6.4" height="4.4" rx="0" fill="#ffffff"/>
<rect x="138.6" y="31.2" width="1.8" height="1.6" rx="0" fill="#1f3573"/>
<rect x="140.6" y="32.8" width="1.6" height="1.4" rx="0" fill="#1f3573"/>
<path d="M847 33.7H854.4M850.7 30V37.4" fill="none" stroke="#ffffff" stroke-width="1.1" />
<path d="M861.7 32.65L864.3 32.65L863 34.15Z" fill="#d8dcea" />
<rect x="869.6" y="31" width="5.2" height="1.5" rx="0" fill="#ffffff"/>
<rect x="869.6" y="33.6" width="2.4" height="2.2" rx="0" fill="#ffffff"/>
<path d="M872.2 35.6L874.6 33" fill="none" stroke="#ffffff" stroke-width="0.7" />
<text x="879" y="37" font-size="6" fill="#ffffff" textLength="48.2" lengthAdjust="spacingAndGlyphs">Original alignment</text>
<path d="M931.2 32.65L933.8 32.65L932.5 34.15Z" fill="#d8dcea" />
<rect x="944" y="30" width="6.6" height="5" rx="1.6" fill="none" stroke="#3c3c3c" stroke-width="0.9"/>
<circle cx="947.3" cy="32.5" r="1.1" fill="#3c3c3c"/>
<path d="M944 37.4H950.6" fill="none" stroke="#3c3c3c" stroke-width="0.9" />
<circle cx="967.3" cy="33.5" r="2" fill="#3c3c3c"/>
<path d="M963.6 33.5H971M967.3 29.8V37.2M964.7 30.9L969.9 36.1M969.9 30.9L964.7 36.1" fill="none" stroke="#3c3c3c" stroke-width="0.7" />
<circle cx="989" cy="32.2" r="2.5" fill="#3c3c3c"/>
<rect x="987.8" y="34.4" width="2.4" height="2.2" rx="0" fill="#3c3c3c"/>
<path d="M987.4 37.6H990.6" fill="none" stroke="#3c3c3c" stroke-width="0.7" />
<rect x="6.6" y="45.2" width="6" height="6" rx="0.4" fill="#f4f4f4" stroke="#5a5a5a" stroke-width="0.7"/>
<rect x="5" y="46.8" width="6" height="6" rx="0.4" fill="#f4f4f4" stroke="#5a5a5a" stroke-width="0.7"/>
<path d="M5.4 53.2H8" fill="none" stroke="#5a5a5a" stroke-width="0.5" />
<text x="25" y="51" font-size="6" fill="#a8a8a8" textLength="32" lengthAdjust="spacingAndGlyphs">Find (Ctrl+F)</text>
<path d="M124.6 47.8C125.4 45.6 129 45.4 130 47.6M130 50.2C129.2 52.4 125.6 52.6 124.6 50.4" fill="none" stroke="#333" stroke-width="1.1" />
<path d="M130.6 46L130.4 48.4L128.2 47.6Z" fill="#333" />
<path d="M124 52L124.2 49.6L126.4 50.4Z" fill="#333" />
<path d="M143.4 47A3.3 3.3 0 1 0 143.6 50.6" fill="none" stroke="#333" stroke-width="1.2" />
<path d="M144.6 45.2L144.4 48L141.8 47.2Z" fill="#333" />
<path d="M147.9 46.45L150.5 46.45L149.2 47.95Z" fill="#555" />
<path d="M4.6 58.4L6.2 59.6L4.6 60.8Z" fill="#444" />
<rect x="10.7" y="57.8" width="6.2" height="4.2" rx="0.3" fill="#f2f2f2" stroke="#6a6a6a" stroke-width="0.7"/>
<path d="M10.7 57.8V57H13.2L13.8 57.8" fill="none" stroke="#6a6a6a" stroke-width="0.6" />
<text x="18.6" y="61.3" font-size="6" fill="#333" textLength="41.4" lengthAdjust="spacingAndGlyphs">Actual Elements</text>
<text x="2.6" y="291.6" font-size="6" fill="#444" textLength="37.4" lengthAdjust="spacingAndGlyphs">Measurements</text>
<path d="M59.9 287.85L62.5 287.85L61.2 289.35Z" fill="#444" />
<text x="2.6" y="303.3" font-size="6" fill="#444" textLength="15.4" lengthAdjust="spacingAndGlyphs">Name</text>
<circle cx="121.6" cy="300.8" r="2.8" fill="none" stroke="#555" stroke-width="0.6"/>
<path d="M120.2 300.8L121.3 301.9L123.2 299.6" fill="none" stroke="#555" stroke-width="0.6" />
<path d="M140 300.8C141.3 299.1 143.9 299.1 145.2 300.8C143.9 302.5 141.3 302.5 140 300.8Z" fill="#444" />
<path d="M3.9 309.85L6.5 309.85L5.2 311.35Z" fill="#444" />
<rect x="10.6" y="307.2" width="2.6" height="5" rx="0" fill="#5aa83c"/>
<rect x="13.4" y="309.6" width="4.6" height="4.8" rx="0.4" fill="#7fc060"/>
<rect x="14.6" y="310.8" width="2.2" height="2.4" rx="0" fill="#e8f4e0"/>
<text x="19" y="313" font-size="6.2" fill="#111" textLength="17" lengthAdjust="spacingAndGlyphs" font-weight="bold">Scan 1</text>
<rect x="20.2" y="316.2" width="6.8" height="5" rx="0.6" fill="#e6e6e6" stroke="#666" stroke-width="0.6"/>
<path d="M21.6 318.7H25.4M24.2 317.6L25.4 318.7L24.2 319.8" fill="none" stroke="#555" stroke-width="0.5" />
<text x="29" y="321.4" font-size="6" fill="#333" textLength="7.2" lengthAdjust="spacingAndGlyphs">M1</text>
<circle cx="119.8" cy="310.5" r="3.4" fill="#2e7d1e"/>
<path d="M119.8 308.3L121.6 310.3L120.5 310.3L120.5 312.5L119.1 312.5L119.1 310.3L118 310.3Z" fill="#fff" />
<circle cx="119.8" cy="318.8" r="3.4" fill="#2e7d1e"/>
<path d="M119.8 316.6L121.6 318.6L120.5 318.6L120.5 320.8L119.1 320.8L119.1 318.6L118 318.6Z" fill="#fff" />
<rect x="142.4" y="307.4" width="6.6" height="6.6" rx="0.6" fill="#fafafa"/>
<path d="M143.1 310.7C144.4 309 147 309 148.3 310.7C147 312.4 144.4 312.4 143.1 310.7Z" fill="#444" />
<rect x="142.4" y="315.5" width="6.6" height="6.6" rx="0.6" fill="#fafafa"/>
<path d="M143.1 318.8C144.4 317.1 147 317.1 148.3 318.8C147 320.5 144.4 320.5 143.1 318.8Z" fill="#444" />
<path d="M129.4 316.4V320.6H133" fill="none" stroke="#3a9a2a" stroke-width="0.7" />
<circle cx="129.4" cy="316.6" r="0.9" fill="#3a9a2a"/>
<circle cx="129.4" cy="320.6" r="0.9" fill="#3a9a2a"/>
<circle cx="133.2" cy="320.6" r="0.9" fill="#3a9a2a"/>
<path d="M161.6 291.4L159.4 293L161.6 294.6Z" fill="#555" />
<path d="M162.8 291.2V294.8" fill="none" stroke="#555" stroke-width="0.7" />
<text x="163" y="51.6" font-size="6" fill="#444" textLength="8.2" lengthAdjust="spacingAndGlyphs">PIP</text>
<text x="187" y="51.6" font-size="6" fill="#c0392b" textLength="20" lengthAdjust="spacingAndGlyphs">Camera</text>
<rect x="162.4" y="59.2" width="6.2" height="6.2" rx="0.5" fill="#f4f4f4" stroke="#5a5a5a" stroke-width="0.7"/>
<rect x="160.8" y="60.8" width="6.2" height="6.2" rx="0.5" fill="#f4f4f4" stroke="#5a5a5a" stroke-width="0.7"/>
<path d="M161 67.6H164" fill="none" stroke="#5a5a5a" stroke-width="0.5" />
<rect x="180.6" y="59.6" width="7.2" height="6.8" rx="0.3" fill="#dcdcdc" stroke="#555" stroke-width="0.7"/>
<path d="M182.6 61L186 63.6L184.4 63.8L185.2 65.4L184.4 65.7L183.6 64.2L182.6 65Z" fill="#222" />
<path d="M192.5 61.85L195.1 61.85L193.8 63.35Z" fill="#444" />
<rect x="203.6" y="59.6" width="7.8" height="6.4" rx="0.3" fill="#f6f6f6" stroke="#555" stroke-width="0.7"/>
<path d="M206 63L207.2 64.2L209.2 61.6" fill="none" stroke="#333" stroke-width="0.7" />
<path d="M215.5 61.85L218.1 61.85L216.8 63.35Z" fill="#444" />
<rect x="226.2" y="58.6" width="8.8" height="5.2" rx="0.3" fill="#6a6a6a"/>
<rect x="226.2" y="58.6" width="8.8" height="1.4" rx="0" fill="#999"/>
<path d="M230.6 63.8V66M228 66.6H233.2" fill="none" stroke="#555" stroke-width="0.9" />
<path d="M238.5 61.85L241.1 61.85L239.8 63.35Z" fill="#444" />
<rect x="249.6" y="59.6" width="7.8" height="6.8" rx="0.3" fill="#8a8a8a"/>
<path d="M250 65.8L256.8 60.2M250 63L254 59.8M253 66.2L257.2 62.8" fill="none" stroke="#333" stroke-width="0.7" />
<path d="M261.5 61.85L264.1 61.85L262.8 63.35Z" fill="#444" />
<path d="M272.2 61.4H274.4L277 59.2V67L274.4 64.8H272.2Z" fill="#444" />
<path d="M277.6 59.4A4 4 0 0 1 277.6 66.8Z" fill="#f4f4f4" stroke="#444" stroke-width="0.7" />
<rect x="980.2" y="60" width="7" height="5.6" rx="0.3" fill="#f6f6f6" stroke="#666" stroke-width="0.6"/>
<rect x="981.4" y="61.6" width="1.9" height="2.2" rx="0" fill="#444"/>
<rect x="984.1" y="61.6" width="1.9" height="2.2" rx="0" fill="#444"/>
<path d="M991.3 61.5L993.9 61.5L992.6 62.9Z" fill="#555" />
<rect x="523.2" y="530.2" width="1.7" height="1.7" rx="0" fill="#333"/>
<rect x="523.2" y="532.9" width="1.7" height="1.7" rx="0" fill="#333"/>
<rect x="523.2" y="535.6" width="1.7" height="1.7" rx="0" fill="#333"/>
<rect x="525.9" y="530.2" width="1.7" height="1.7" rx="0" fill="#333"/>
<rect x="525.9" y="532.9" width="1.7" height="1.7" rx="0" fill="#333"/>
<rect x="525.9" y="535.6" width="1.7" height="1.7" rx="0" fill="#333"/>
<rect x="528.6" y="530.2" width="1.7" height="1.7" rx="0" fill="#333"/>
<rect x="528.6" y="532.9" width="1.7" height="1.7" rx="0" fill="#333"/>
<rect x="528.6" y="535.6" width="1.7" height="1.7" rx="0" fill="#333"/>
<circle cx="543.4" cy="534" r="1.2" fill="#222"/>
<rect x="560.4" y="530" width="6" height="6" rx="0.5" fill="#8a8a8a"/>
<rect x="562" y="531.6" width="6.6" height="6.6" rx="0.5" fill="#3a3a3a"/>
<text x="563.8" y="537.4" font-size="5.6" fill="#fff" font-weight="bold">1</text>
<path d="M572.3 532.25L574.9 532.25L573.6 533.75Z" fill="#444" />
<rect x="584.2" y="531.4" width="1.1" height="5" rx="0" fill="#333"/>
<rect x="586.2" y="531.4" width="1.1" height="5" rx="0" fill="#333"/>
<rect x="588.2" y="531.4" width="1.1" height="5" rx="0" fill="#333"/>
<rect x="590.2" y="531.4" width="1.1" height="5" rx="0" fill="#333"/>
<path d="M599.8 531.8L602.2 531.8L601 530.4Z" fill="#555" />
<path d="M599.8 536L602.2 536L601 537.4Z" fill="#555" />
<path d="M627.8 531.8L630.2 531.8L629 530.4Z" fill="#555" />
<path d="M627.8 536L630.2 536L629 537.4Z" fill="#555" />
<circle cx="615.6" cy="533.8" r="2.3" fill="none" stroke="#333" stroke-width="1.3"/>
<defs>
<linearGradient id="tb" x1="0" x2="1" y1="0" y2="0">
<stop offset="0" stop-color="#2d86cc"/><stop offset="0.06" stop-color="#2f9be6"/><stop offset="0.12" stop-color="#3aaef2"/>
<stop offset="0.22" stop-color="#38a9f2"/><stop offset="0.4" stop-color="#2598ee"/><stop offset="0.6" stop-color="#1a86e6"/>
<stop offset="0.7" stop-color="#1478dc"/><stop offset="0.8" stop-color="#0e66cc"/><stop offset="0.9" stop-color="#0c5cbe"/><stop offset="1" stop-color="#0e5ab6"/>
</linearGradient>
<linearGradient id="tbv" x1="0" x2="0" y1="0" y2="1"><stop offset="0" stop-color="#fff" stop-opacity="0.28"/><stop offset="0.12" stop-color="#fff" stop-opacity="0.06"/><stop offset="0.6" stop-color="#000" stop-opacity="0"/><stop offset="1" stop-color="#000" stop-opacity="0.12"/></linearGradient>
<radialGradient id="orb" cx="0.5" cy="0.35" r="0.7"><stop offset="0" stop-color="#8fd0f4"/><stop offset="0.5" stop-color="#2e7fc8"/><stop offset="1" stop-color="#123a78"/></radialGradient>
</defs>
<rect x="0" y="543" width="999" height="19" fill="url(#tb)"/>
<rect x="0" y="543" width="999" height="19" fill="url(#tbv)"/>
<rect x="0" y="543" width="999" height="0.7" fill="#5a7fa8" opacity="0.6"/>
<path d="M676 543L690 543L704 562L694 562Z" fill="#fff" opacity="0.22" filter="url(#b20)"/>
<path d="M78 562L90 543L95 543L84 562Z" fill="#fff" opacity="0.2" filter="url(#b10)"/>
<path d="M380 562L430 543L450 543L410 562Z" fill="#fff" opacity="0.07" filter="url(#b20)"/>
<rect x="110" y="543.8" width="25.6" height="18" rx="1" fill="#8fd0fa" opacity="0.55" stroke="#bfe4fb" stroke-width="0.6"/>
<rect x="137" y="543.8" width="26" height="18" rx="1" fill="#7cc6f6" opacity="0.5" stroke="#bfe4fb" stroke-width="0.6"/>
<circle cx="12.6" cy="552.6" r="7.6" fill="url(#orb)" stroke="#9ccbee" stroke-width="0.5" stroke-opacity="0.6"/>
<path d="M8.6 549.6C10 548.8 11 548.9 12 549.6L11.4 552.4C10.4 551.8 9.4 551.7 8 552.4Z" fill="#e8502a"/>
<path d="M12.8 549.9C14 550.6 15 550.6 16.6 549.8L16 552.6C14.6 553.3 13.6 553.2 12.2 552.6Z" fill="#7cc242"/>
<path d="M7.8 553.2C9.2 552.5 10.2 552.6 11.2 553.2L10.6 556C9.6 555.4 8.6 555.4 7.2 556Z" fill="#3a9ae8"/>
<path d="M12 553.5C13.4 554.2 14.4 554.1 15.8 553.4L15.2 556.2C13.8 556.9 12.8 556.9 11.4 556.3Z" fill="#f8c325"/>
<circle cx="40.6" cy="552.2" r="7" fill="#1ed760"/>
<path d="M36.4 549.8C39.4 548.8 42.8 549.2 45 550.6M36.9 552.3C39.4 551.5 42.2 551.8 44.2 553M37.4 554.7C39.4 554.1 41.6 554.3 43.2 555.3" fill="none" stroke="#0c1a10" stroke-width="1.25" stroke-linecap="round"/>
<rect x="64.6" y="546" width="11.4" height="13.4" rx="0.8" fill="#1e8a4c"/><rect x="70.3" y="546" width="5.7" height="4.5" fill="#3cb878"/><rect x="70.3" y="550.5" width="5.7" height="4.5" fill="#1a7a42"/><rect x="64.6" y="555" width="11.4" height="4.4" fill="#14603a"/>
<rect x="60.2" y="548.8" width="8" height="8" rx="0.8" fill="#107c41"/>
<text x="64.2" y="555.3" font-size="6.4" font-weight="bold" fill="#fff" text-anchor="middle">X</text>
<path d="M88.4 547.2H94L95 546H103.4V559H88.4Z" fill="#e8c66a"/><rect x="89.6" y="547" width="12.6" height="6" fill="#f6f0d8"/><path d="M88 551H104L103.6 559.4H88.4Z" fill="#f4d77a"/><rect x="90.4" y="553.2" width="11.2" height="4.2" fill="#9ad0f0"/><rect x="93.6" y="557" width="4.8" height="1.2" fill="#e6d8a0"/>
<rect x="115.2" y="545.4" width="15.2" height="14" fill="#fff" stroke="#c4504d" stroke-width="0.8"/>
<rect x="118.2" y="548.6" width="1.5" height="7.8" fill="#c4504d"/>
<rect x="120.8" y="548.6" width="1.5" height="7.8" fill="#c4504d"/>
<rect x="123.4" y="548.6" width="1.5" height="7.8" fill="#c4504d"/>
<rect x="126" y="548.6" width="1.5" height="7.8" fill="#c4504d"/>
<circle cx="150" cy="552.6" r="7.5" fill="#e94235"/>
<path d="M150 552.6L143.5 548.85A7.5 7.5 0 0 0 150 560.1L153.25 554.5Z" fill="#34a853"/>
<path d="M150 552.6L150 560.1A7.5 7.5 0 0 0 156.5 548.85L150 548.85Z" fill="#fbbc04"/>
<path d="M150 552.6L156.5 548.85A7.5 7.5 0 0 0 143.5 548.85Z" fill="#e94235"/>
<circle cx="150" cy="552.6" r="3.6" fill="#fff"/><circle cx="150" cy="552.6" r="2.8" fill="#4285f4"/>
<rect x="172.2" y="546" width="10.4" height="13.6" rx="0.8" fill="#a8c4dc"/><rect x="173.4" y="547.2" width="8" height="3.2" fill="#dfe9f2"/><rect x="173.4" y="551.4" width="8" height="7.2" fill="#c6d6e6"/><rect x="179.4" y="555.4" width="2" height="3.2" fill="#e2c070"/>
<rect x="201" y="546" width="10.6" height="13" rx="0.8" fill="#1464b8"/><rect x="206" y="546" width="5.6" height="4.2" fill="#28a8ea"/><rect x="201" y="554.6" width="10.6" height="4.4" fill="#0c4e9a"/>
<rect x="196.8" y="548.6" width="8" height="8" rx="0.8" fill="#0f6cc4"/>
<text x="200.8" y="555" font-size="6.2" font-weight="bold" fill="#fff" text-anchor="middle">O</text>
<text x="903.6" y="554.4" font-size="6" fill="#e6eef8" textLength="8" lengthAdjust="spacingAndGlyphs">EN</text>
<path d="M920 554.2L921.5 552.8L923 554.2Z" fill="#dfe8f4"/>
<path d="M931.6 549.6V556.4" stroke="#e8eef6" stroke-width="0.8"/><path d="M932 549.8H936L935.4 551.6L938 552.8H932Z" fill="#f2f4f8"/>
<rect x="943.2" y="550.2" width="6.4" height="5" fill="#2a4a78" stroke="#e0e6ee" stroke-width="0.8"/><path d="M944.6 556.6H948.4" stroke="#e0e6ee" stroke-width="0.8"/>
<text x="966" y="550.8" font-size="5.8" fill="#eef3fa" textLength="14.6" lengthAdjust="spacingAndGlyphs">07:35</text>
<text x="958.6" y="559.9" font-size="5.8" fill="#eef3fa" textLength="29" lengthAdjust="spacingAndGlyphs">19/09/2023</text>
<rect x="993.4" y="543.6" width="5.6" height="18.4" fill="#3a78c0" opacity="0.55"/><rect x="993.2" y="543.6" width="0.6" height="18.4" fill="#0a3a7a" opacity="0.7"/>
</svg>
</div>
</div>
</body></html>
